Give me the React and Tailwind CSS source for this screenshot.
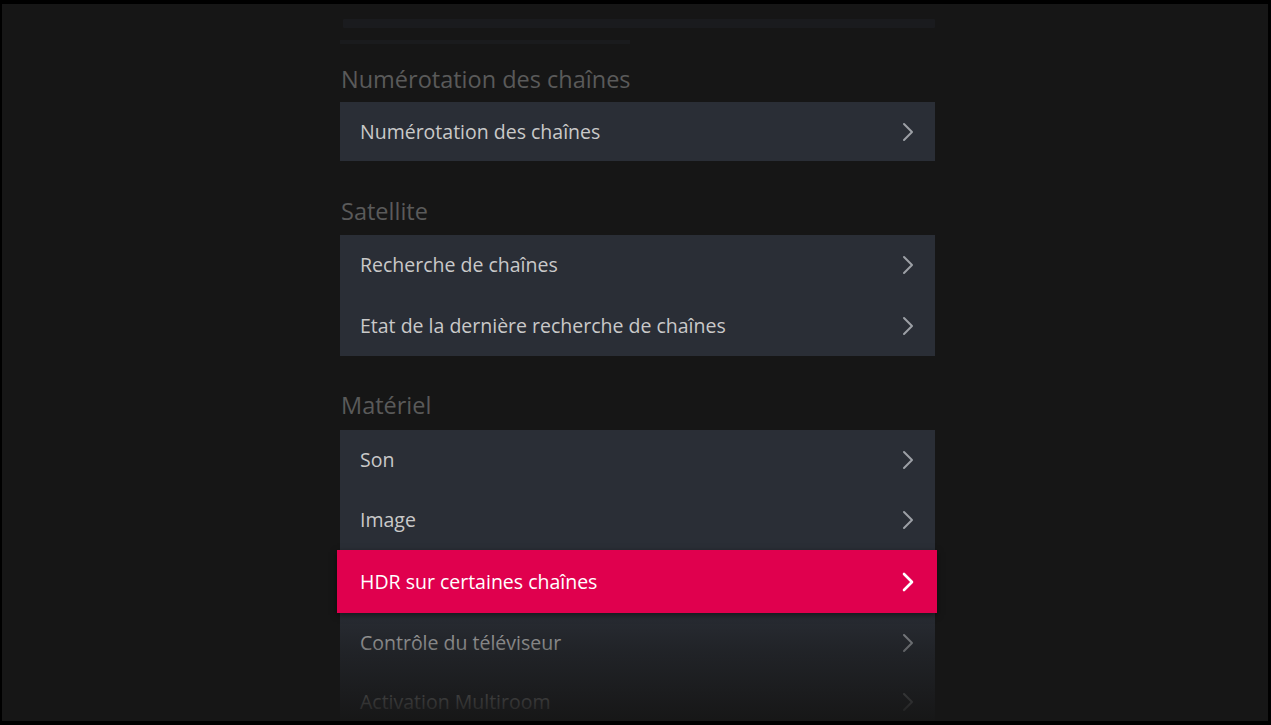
import React from "react";

const Chevron = ({ className, w = 2 }) => (
  <svg width="12" height="20" viewBox="0 0 12 20" className={className} fill="none">
    <path d="M2 2 L10 10 L2 18" stroke="currentColor" strokeWidth={w} strokeLinecap="round" strokeLinejoin="round" />
  </svg>
);

const Row = ({ label, h = "h-[60px]" }) => (
  <div className={`flex items-center justify-between pl-[20px] pr-[21px] ${h}`}>
    <span className="text-[19.5px] text-[#c9c9c9]">{label}</span>
    <Chevron className="text-[#9ca0a6]" />
  </div>
);

const Header = ({ children, mt }) => (
  <div className={`${mt} h-[30px] flex items-center text-[23.5px] leading-[30px] text-[#5a5a5a] pl-[1px]`}>
    {children}
  </div>
);

export default function App() {
  return (
    <div
      className="w-[1271px] h-[725px] bg-black pt-[4px] pl-[2px] pr-[3px] pb-[4px]"
      style={{ fontFamily: '"Open Sans", "Noto Sans", sans-serif' }}
    >
      <div className="relative w-full h-full bg-[#161616] overflow-hidden">
        <div className="ml-[338px] w-[595px]">
          {/* faded previous content */}
          <div className="mt-[15px] h-[9px] w-[592px] ml-[3px] bg-[#1a1b1e] rounded-[1px]" />
          <div className="mt-[12px] h-[4px] w-[290px] bg-[#1a1b1d]" />

          <Header mt="mt-[20px]">Numérotation des chaînes</Header>
          <div className="mt-[8px] bg-[#2a2e36]">
            <Row label="Numérotation des chaînes" h="h-[59px]" />
          </div>

          <Header mt="mt-[35px]">Satellite</Header>
          <div className="mt-[9px] bg-[#2a2e36]">
            <Row label="Recherche de chaînes" />
            <Row label="Etat de la dernière recherche de chaînes" h="h-[61px]" />
          </div>

          <Header mt="mt-[34px]">Matériel</Header>
          <div className="mt-[10px] bg-[#2a2e36]">
            <Row label="Son" />
            <Row label="Image" />
            <div className="relative z-20 -ml-[3px] -mr-[2px] h-[63px] bg-[#e0004e] shadow-[0_2px_6px_rgba(0,0,0,0.5)] flex items-center justify-between pl-[23px] pr-[23px]">
              <span className="text-[19.5px] text-white">HDR sur certaines chaînes</span>
              <Chevron className="text-white" w={2.6} />
            </div>
            <Row label="Contrôle du téléviseur" h="h-[59px]" />
            <Row label="Activation Multiroom" />
          </div>
        </div>

        {/* bottom fade overlay */}
        <div className="pointer-events-none absolute left-0 right-0 top-[600px] bottom-0 z-10 bg-gradient-to-b from-[rgba(22,22,22,0)] via-[rgba(22,22,22,0.45)] via-40% to-[rgba(22,22,22,0.97)]" />
      </div>
    </div>
  );
}
